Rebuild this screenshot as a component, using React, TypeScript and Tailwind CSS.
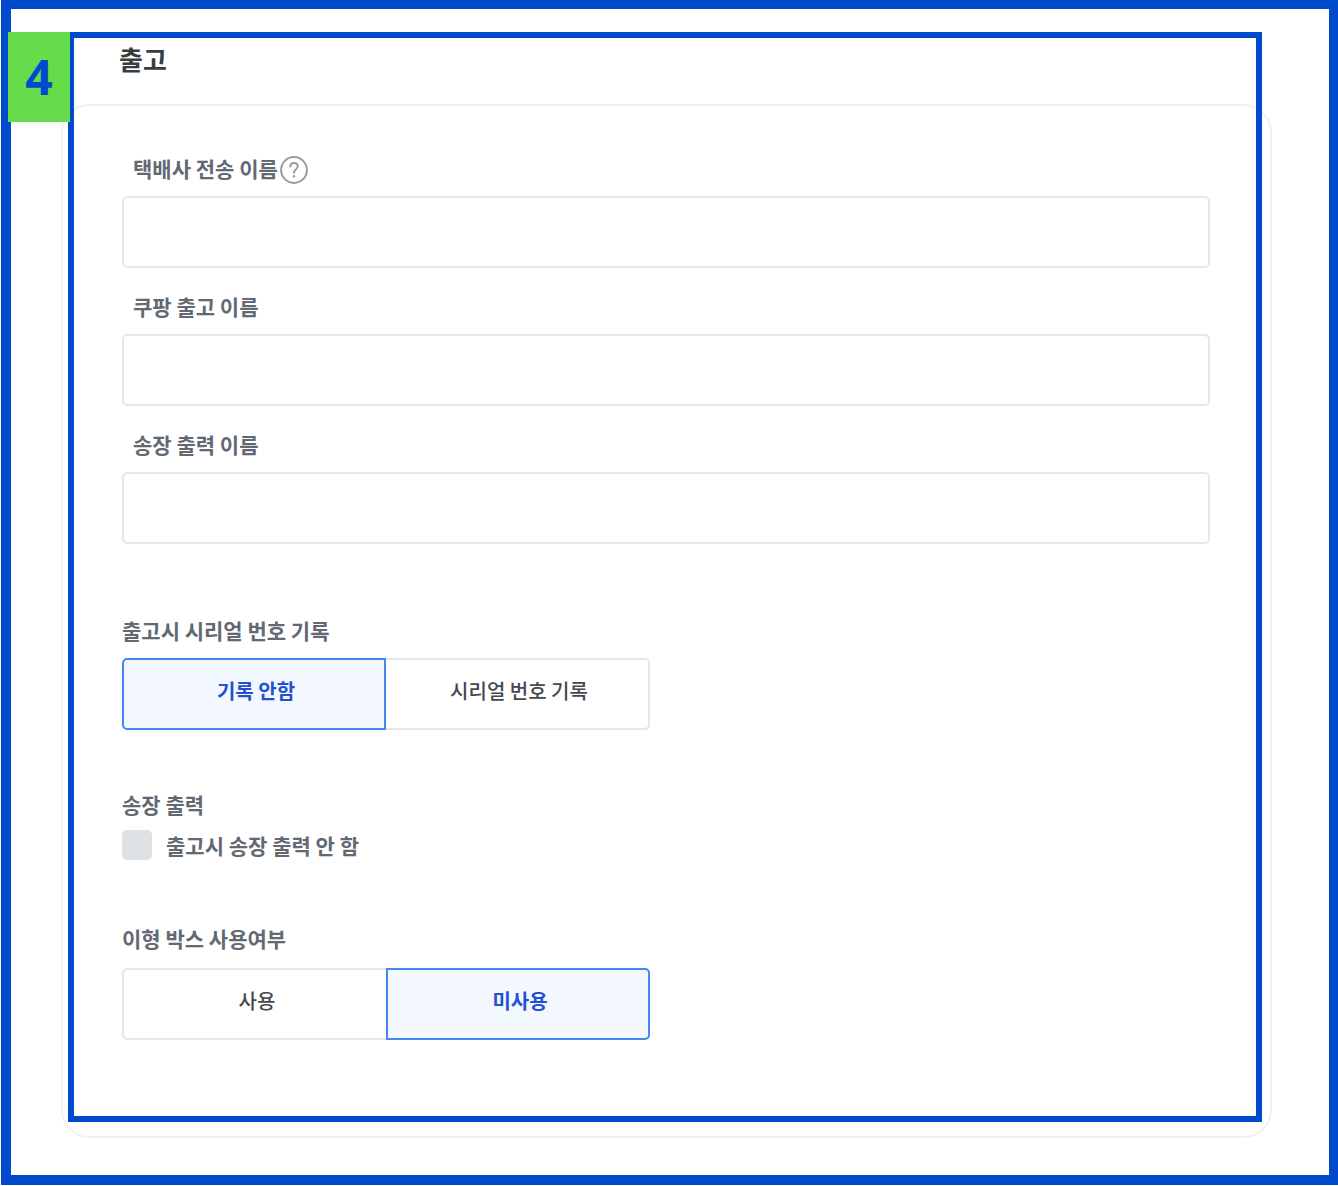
import { useState } from "react";
import type { ReactNode } from "react";
import clsx from "clsx";

interface TextFieldProps {
  id: string;
  label: string;
  hint?: ReactNode;
}

function HelpIcon() {
  return (
    <svg viewBox="0 0 28 28" className="h-7 w-7" fill="none" stroke="#959ca4" strokeLinecap="round" strokeLinejoin="round">
      <circle cx="14" cy="14" r="12.9" strokeWidth="2" />
      <path d="M10.3 10.6c.1-2.1 1.5-3.5 3.7-3.5s3.7 1.3 3.7 3.2c0 1.6-.8 2.3-1.9 3.2-1.2.9-1.8 1.6-1.8 3.2" strokeWidth="2" />
      <path d="M14 20.2v.3" strokeWidth="2.4" />
    </svg>
  );
}

function TextField({ id, label, hint }: TextFieldProps) {
  const [value, setValue] = useState("");

  return (
    <div>
      <div className="flex h-7 items-start gap-0.5 pl-[11px]">
        <label htmlFor={id} className="leading-6">{label}</label>
        {hint}
      </div>
      <input
        id={id}
        type="text"
        value={value}
        onChange={(e) => setValue(e.target.value)}
        className="mt-3 block h-18 w-full rounded-[5px] border-2 border-[#e5e7e8] bg-white px-4 outline-none focus:border-[#4688f1]"
      />
    </div>
  );
}

interface SegmentedProps {
  labelId: string;
  options: string[];
  initial: string;
}

function Segmented({ labelId, options, initial }: SegmentedProps) {
  const [selected, setSelected] = useState(initial);

  return (
    <div role="group" aria-labelledby={labelId} className="grid w-full max-w-[528px] grid-cols-2">
      {options.map((option) => (
        <button
          key={option}
          type="button"
          aria-pressed={option === selected}
          onClick={() => setSelected(option)}
          className={clsx(
            "h-18 border-2 pb-1.5 pl-1 text-xl first:rounded-l-[5px] last:rounded-r-[5px]",
            option === selected
              ? "border-[#4688f1] bg-[#f3f8ff] font-bold text-[#2450d0]"
              : "border-[#e5e7e8] bg-white font-medium text-[#45494d] first:border-r-0 last:border-l-0",
          )}
        >
          {option}
        </button>
      ))}
    </div>
  );
}

export default function App() {
  const [skipInvoice, setSkipInvoice] = useState(false);

  return (
    <div className="bg-white pb-px pl-px font-['Noto_Sans_CJK_KR',sans-serif] text-[21px] leading-7 text-[#626972]">
      <main className="border-10 border-t-9 border-r-9 border-[#004bcc] pt-[23px] pr-[57px] pb-[37px] pl-[50px]">
        <section className="relative">
          <h1 className="h-18 pt-[11px] pl-[58px] text-[26px] leading-8 font-bold text-[#3a3d40]">출고</h1>

          <div className="rounded-[28px] border-2 border-[#f0f1f2] pt-[50px] pr-[60px] pb-24 pl-[59px] font-bold">
            <div className="flex flex-col gap-[26px]">
              <TextField
                id="courier-name"
                label="택배사 전송 이름"
                hint={
                  <button type="button" aria-label="도움말">
                    <HelpIcon />
                  </button>
                }
              />
              <TextField id="coupang-name" label="쿠팡 출고 이름" />
              <TextField id="invoice-name" label="송장 출력 이름" />
            </div>

            <h2 id="serial-label" className="mt-[74px] mb-4 leading-6">출고시 시리얼 번호 기록</h2>
            <Segmented labelId="serial-label" options={["기록 안함", "시리얼 번호 기록"]} initial="기록 안함" />

            <h2 className="mt-[62px] leading-6">송장 출력</h2>
            <label className="mt-[14px] flex h-[30px] items-center gap-[14px]">
              <input
                type="checkbox"
                checked={skipInvoice}
                onChange={(e) => setSkipInvoice(e.target.checked)}
                className="h-[30px] w-[30px] appearance-none rounded-[5px] bg-[#dee2e5] checked:bg-[#4688f1]"
              />
              출고시 송장 출력 안 함
            </label>

            <h2 id="box-label" className="mt-[66px] mb-[18px] leading-6">이형 박스 사용여부</h2>
            <Segmented labelId="box-label" options={["사용", "미사용"]} initial="미사용" />
          </div>

          {/* step marker drawn over the card */}
          <div className="pointer-events-none absolute top-0 right-[10px] bottom-4 left-[7px] border-6 border-[#004bcc]" />
          <div className="absolute top-0 -left-[53px] flex h-[90px] w-[62px] items-center justify-center bg-[#66dc4b] font-['Open_Sans',sans-serif] text-5xl font-bold text-[#004bcc]">
            4
          </div>
        </section>
      </main>
    </div>
  );
}
